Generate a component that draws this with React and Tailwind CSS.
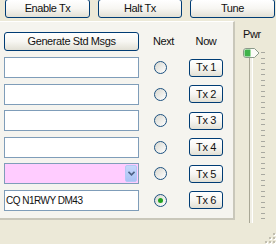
const font = { fontFamily: '"Liberation Sans", Arial, sans-serif' }

function XpButton({ children, className = '' }) {
  return (
    <button
      className={`flex items-center justify-center rounded-[3px] border border-[#003c74] bg-linear-to-b from-white via-[#f7f6f2] to-[#e2e0d5] text-[11px] tracking-[-0.4px] text-[#111] ${className}`}
    >
      {children}
    </button>
  )
}

function Radio({ checked }) {
  return (
    <div className="flex h-[13px] w-[13px] items-center justify-center rounded-full border border-[#1c5180] bg-linear-to-br from-[#d8d7cf] to-white">
      {checked && <div className="h-[5px] w-[5px] rounded-full bg-[#21a121]" />}
    </div>
  )
}

function Row({ n, children }) {
  return (
    <div className="flex h-[21px] items-center">
      {children}
      <div className="flex w-[42px] justify-center">
        <Radio checked={n === 6} />
      </div>
      <XpButton className="ml-[8px] h-[18px] w-[34px]">Tx {n}</XpButton>
    </div>
  )
}

const textBox = 'h-[21px] w-[135px] border border-[#7f9db9] bg-white'

export default function App() {
  const ticks = Array.from({ length: 31 }, (_, i) => i)
  return (
    <div className="relative h-[244px] w-[276px] overflow-hidden bg-[#ece9d8]" style={font}>
      <div className="-mt-px flex gap-[8px] pl-[5px]">
        <XpButton className="h-[19px] w-[85px]">Enable Tx</XpButton>
        <XpButton className="h-[19px] w-[84px]">Halt Tx</XpButton>
        <XpButton className="h-[19px] w-[85px]">Tune</XpButton>
      </div>

      <div className="mt-[3px] flex">
        <div className="h-[199px] w-[235px] border-t border-r-2 border-b-2 border-t-white border-r-[#c9c7ba] border-b-[#c9c7ba] bg-[#f5f4ef] pt-[10px] pl-[4px]">
          <div className="flex h-[19px] items-center">
            <XpButton className="h-[19px] w-[135px]">Generate Std Msgs</XpButton>
            <div className="w-[42px] pl-[7px] text-center text-[11px] tracking-[-0.4px] text-[#111]">Next</div>
            <div className="ml-[8px] w-[34px] text-center text-[11px] tracking-[-0.4px] text-[#111]">Now</div>
          </div>
          <div className="mt-[6px] flex flex-col gap-[5.6px]">
            <Row n={1}><div className={textBox} /></Row>
            <Row n={2}><div className={textBox} /></Row>
            <Row n={3}><div className={textBox} /></Row>
            <Row n={4}><div className={textBox} /></Row>
            <Row n={5}>
              <div className="flex h-[21px] w-[135px] border border-[#7f9db9] bg-[#ffccff] p-px">
                <div className="flex-1" />
                <div className="flex w-[12px] items-center justify-center rounded-[2px] border border-[#b4c8f6] bg-linear-to-b from-[#c6d7fb] to-[#a9c2f4]">
                  <svg width="7" height="5" viewBox="0 0 7 5">
                    <path d="M0.5 0.8 L3.5 3.8 L6.5 0.8" fill="none" stroke="#4d6185" strokeWidth="1.6" />
                  </svg>
                </div>
              </div>
            </Row>
            <Row n={6}>
              <div className={`${textBox} flex items-center pl-[1px] text-[10px] tracking-[-0.5px] text-[#111]`}>CQ N1RWY DM43</div>
            </Row>
          </div>
        </div>

        <div className="ml-[8px] flex flex-col pt-[7px]">
          <div className="text-[11px] leading-[13px] tracking-[-0.4px] text-[#111]">Pwr</div>
          <div className="relative mt-[6px] h-[176px] w-[26px]">
            <div className="absolute top-[4px] bottom-0 left-[6px] w-[4px] border-r border-l border-r-white border-l-[#a9a796] bg-[#f1efe6]" />
            <svg className="absolute top-[1px] left-0" width="17" height="10" viewBox="0 0 17 10">
              <path d="M3 0.5 H11.5 L16 5 L11.5 9.5 H3 Q0.5 9.5 0.5 7 V3 Q0.5 0.5 3 0.5 Z" fill="#fbfbf8" stroke="#8b9a8a" />
              <path d="M3 1.5 H7 V8.5 H3 Q1.5 8.5 1.5 7 V3 Q1.5 1.5 3 1.5 Z" fill="#3fb34a" />
              <path d="M7 1.5 H8 V8.5 H7 Z" fill="#9edc9f" />
            </svg>
            <div className="absolute top-[5px] left-[18px] flex flex-col gap-[4.556px]">
              {ticks.map((t) => (
                <div key={t} className="h-px w-[4px] bg-[#a8a8a0]" />
              ))}
            </div>
          </div>
        </div>
      </div>

      <svg className="absolute right-0 bottom-0" width="12" height="12" viewBox="0 0 12 12">
        {[[9, 1], [9, 5], [5, 5], [9, 9], [5, 9], [1, 9]].map(([x, y]) => (
          <g key={`${x}-${y}`}>
            <rect x={x + 1} y={y + 1} width="2" height="2" fill="#fff" />
            <rect x={x} y={y} width="2" height="2" fill="#c1beb0" />
          </g>
        ))}
      </svg>
    </div>
  )
}
